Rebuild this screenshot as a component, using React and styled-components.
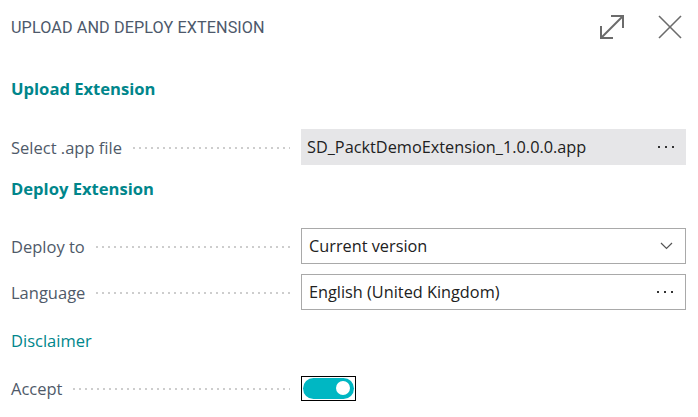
import React from "react"
import styled, { createGlobalStyle } from "styled-components"

const Global = createGlobalStyle`
  html, body {
    margin: 0;
    padding: 0;
    background: #ffffff;
  }
  body {
    font-family: "Open Sans", "Noto Sans", sans-serif;
  }
`

const Page = styled.div`
  width: 698px;
  height: 417px;
  box-sizing: border-box;
  padding: 0 12px 0 11px;
  background: #ffffff;
  overflow: hidden;
`

const Header = styled.div`
  display: flex;
  align-items: center;
  justify-content: space-between;
  height: 54px;
`

const Title = styled.h1`
  margin: 0;
  font-family: Roboto, "Liberation Sans", sans-serif;
  font-size: 16.2px;
  font-weight: 400;
  letter-spacing: 0.1px;
  color: #4d596b;
  text-transform: uppercase;
`

const Actions = styled.div`
  display: flex;
  align-items: center;
  gap: 32px;
  padding-right: 4px;
`

const IconButton = styled.button`
  display: flex;
  align-items: center;
  justify-content: center;
  padding: 0;
  border: 0;
  background: none;
  color: #6b6b6b;
  cursor: pointer;
`

const SectionTitle = styled.h2`
  margin: ${p => p.$top}px 0 0;
  height: 24px;
  line-height: 24px;
  font-size: 16.6px;
  font-weight: 700;
  color: #00868b;
`

const Row = styled.div`
  display: flex;
  align-items: center;
  height: 36px;
  margin-top: ${p => p.$top}px;
`

const Label = styled.div`
  display: flex;
  align-items: center;
  width: 279px;
  flex-shrink: 0;
  font-size: 16.5px;
  color: #4f5a69;
  white-space: nowrap;
`

const Leader = styled.span`
  flex: 1;
  height: 2px;
  margin: 2px 0 0 9px;
  background-image: radial-gradient(circle, #cccccc 0.7px, transparent 1px);
  background-size: 6px 2px;
  background-repeat: repeat-x;
`

const Field = styled.div`
  flex: 1;
  margin-left: 11px;
  height: 36px;
  box-sizing: border-box;
  display: flex;
  align-items: center;
  justify-content: space-between;
  padding: 0 12px 0 ${p => (p.$filled ? 6 : 7)}px;
  background: ${p => (p.$filled ? "#e6e6e8" : "#ffffff")};
  border: ${p => (p.$filled ? "0" : "1px solid #a9a9a9")};
  font-size: 16.3px;
  color: #212121;
  white-space: nowrap;
`

const Dots = styled.span`
  display: flex;
  gap: 5px;
  span {
    width: 2px;
    height: 2px;
    background: #333333;
  }
`

const Link = styled.a`
  display: block;
  margin-top: 19px;
  height: 24px;
  line-height: 24px;
  font-size: 16.5px;
  color: #00868b;
  text-decoration: none;
`

const ToggleFrame = styled.div`
  margin-left: 11px;
  width: 55px;
  height: 25px;
  box-sizing: border-box;
  border: 1px solid #000000;
  padding: 1px;
  display: flex;
`

const ToggleTrack = styled.div`
  flex: 1;
  display: flex;
  align-items: center;
  justify-content: ${p => (p.$on ? "flex-end" : "flex-start")};
  padding: 0 4px;
  border-radius: 11px;
  background: ${p => (p.$on ? "#00b7c3" : "#ffffff")};
`

const Thumb = styled.span`
  width: 14px;
  height: 14px;
  border-radius: 50%;
  background: #ffffff;
`

const Ellipsis = () => (
  <Dots>
    <span />
    <span />
    <span />
  </Dots>
)

const ExpandIcon = () => (
  <svg width="28" height="28" viewBox="0 0 28 28" fill="none" stroke="currentColor" strokeWidth="2">
    <path d="M3 25 L25 3" />
    <path d="M13 3 H25 V15" />
    <path d="M3 13 V25 H15" />
  </svg>
)

const CloseIcon = () => (
  <svg width="24" height="24" viewBox="0 0 24 24" fill="none" stroke="currentColor" strokeWidth="1.6">
    <path d="M1 1 L23 23" />
    <path d="M23 1 L1 23" />
  </svg>
)

const Chevron = () => (
  <svg width="13" height="8" viewBox="0 0 13 8" fill="none" stroke="#555" strokeWidth="1.2">
    <path d="M1 1 L6.5 6.5 L12 1" />
  </svg>
)

export default function App() {
  return (
    <Page>
      <Global />
      <Header>
        <Title>Upload and Deploy Extension</Title>
        <Actions>
          <IconButton aria-label="Expand">
            <ExpandIcon />
          </IconButton>
          <IconButton aria-label="Close">
            <CloseIcon />
          </IconButton>
        </Actions>
      </Header>

      <SectionTitle $top={23}>Upload Extension</SectionTitle>
      <Row $top={28}>
        <Label>
          Select .app file
          <Leader />
        </Label>
        <Field $filled>
          SD_PacktDemoExtension_1.0.0.0.app
          <Ellipsis />
        </Field>
      </Row>

      <SectionTitle $top={12}>Deploy Extension</SectionTitle>
      <Row $top={27}>
        <Label>
          Deploy to
          <Leader />
        </Label>
        <Field>
          Current version
          <Chevron />
        </Field>
      </Row>
      <Row $top={10}>
        <Label>
          Language
          <Leader />
        </Label>
        <Field>
          English (United Kingdom)
          <Ellipsis />
        </Field>
      </Row>

      <Link href="#">Disclaimer</Link>

      <Row $top={17}>
        <Label>
          Accept
          <Leader />
        </Label>
        <ToggleFrame>
          <ToggleTrack $on>
            <Thumb />
          </ToggleTrack>
        </ToggleFrame>
      </Row>
    </Page>
  )
}
